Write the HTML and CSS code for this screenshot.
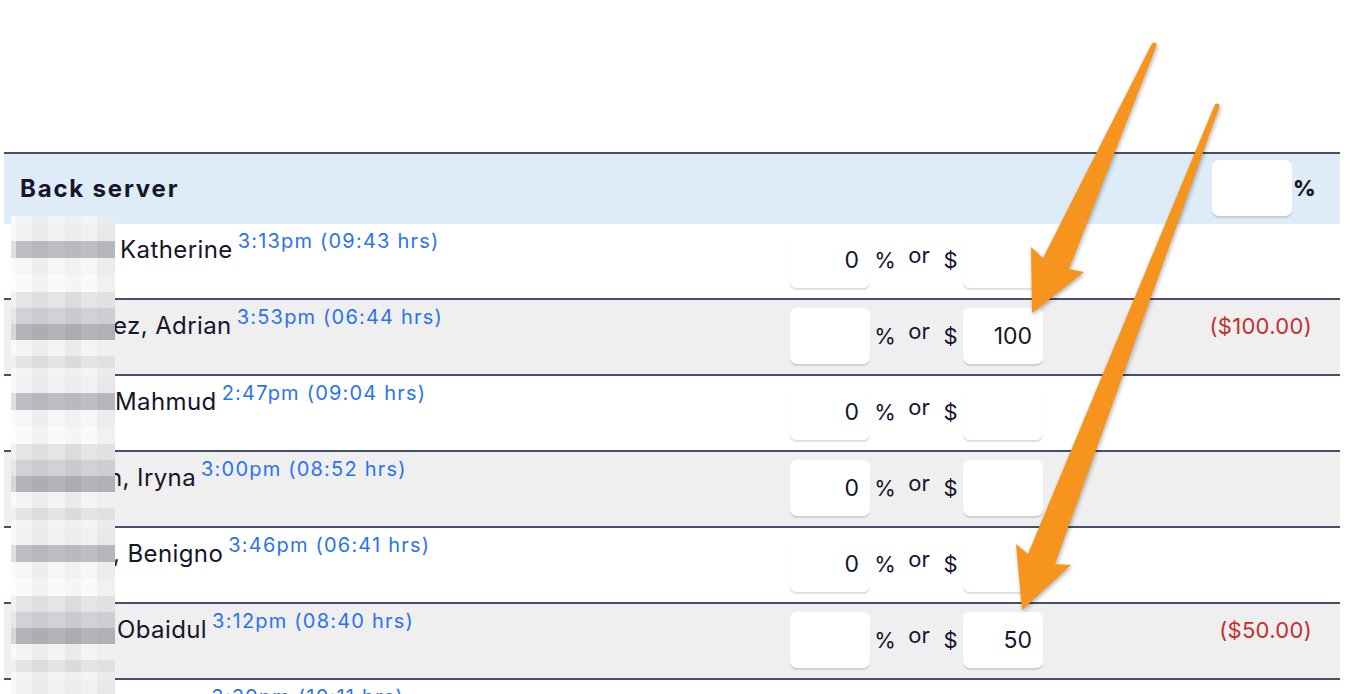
FILE: index.html
```html
<!DOCTYPE html>
<html lang="en">
<head>
    <meta charset="UTF-8">
    <meta name="viewport" content="width=device-width, initial-scale=1.0">
    <title>Tip Out - Back server</title>
    <link rel="stylesheet" href="styles.css">
</head>
<body>
    <div class="sheet">
        <div class="section-head">
            <h2>Back server</h2>
            <div class="pct-total">
                <input class="field" type="text" value="">
                <span>%</span>
            </div>
        </div>

        <div class="row">
            <div class="mask"></div>
            <div class="who"><span class="name nudge-7">Katherine</span><span class="clock">3:13pm (09:43 hrs)</span></div>
            <div class="tip-inputs">
                <input class="field" type="text" value="0">
                <span class="unit">%</span><span class="or">or</span><span class="unit">$</span>
                <input class="field" type="text" value="">
            </div>
            <div class="amount"></div>
        </div>

        <div class="row alt">
            <div class="mask"></div>
            <div class="who"><span class="name">ez, Adrian</span><span class="clock">3:53pm (06:44 hrs)</span></div>
            <div class="tip-inputs">
                <input class="field" type="text" value="">
                <span class="unit">%</span><span class="or">or</span><span class="unit">$</span>
                <input class="field" type="text" value="100">
            </div>
            <div class="amount">($100.00)</div>
        </div>

        <div class="row">
            <div class="mask"></div>
            <div class="who"><span class="name nudge-2">Mahmud</span><span class="clock">2:47pm (09:04 hrs)</span></div>
            <div class="tip-inputs">
                <input class="field" type="text" value="0">
                <span class="unit">%</span><span class="or">or</span><span class="unit">$</span>
                <input class="field" type="text" value="">
            </div>
            <div class="amount"></div>
        </div>

        <div class="row alt">
            <div class="mask"></div>
            <div class="who"><span class="name pull-5">h, Iryna</span><span class="clock">3:00pm (08:52 hrs)</span></div>
            <div class="tip-inputs">
                <input class="field" type="text" value="0">
                <span class="unit">%</span><span class="or">or</span><span class="unit">$</span>
                <input class="field" type="text" value="">
            </div>
            <div class="amount"></div>
        </div>

        <div class="row">
            <div class="mask"></div>
            <div class="who"><span class="name">, Benigno</span><span class="clock">3:46pm (06:41 hrs)</span></div>
            <div class="tip-inputs">
                <input class="field" type="text" value="0">
                <span class="unit">%</span><span class="or">or</span><span class="unit">$</span>
                <input class="field" type="text" value="">
            </div>
            <div class="amount"></div>
        </div>

        <div class="row alt">
            <div class="mask"></div>
            <div class="who"><span class="name nudge-4">Obaidul</span><span class="clock">3:12pm (08:40 hrs)</span></div>
            <div class="tip-inputs">
                <input class="field" type="text" value="">
                <span class="unit">%</span><span class="or">or</span><span class="unit">$</span>
                <input class="field" type="text" value="50">
            </div>
            <div class="amount">($50.00)</div>
        </div>

        <div class="row">
            <div class="mask"></div>
            <div class="who"><span class="name nudge-4">Ricardo</span><span class="clock">3:39pm (10:11 hrs)</span></div>
            <div class="tip-inputs">
                <input class="field" type="text" value="0">
                <span class="unit">%</span><span class="or">or</span><span class="unit">$</span>
                <input class="field" type="text" value="">
            </div>
            <div class="amount"></div>
        </div>
    </div>

    <!-- annotation arrows drawn over the screenshot -->
    <svg class="arrows" width="1352" height="694" viewBox="0 0 1352 694">
        <path d="M1151.7,44 L1043,258 L1031,247 L1032,313 L1084,272 L1069,269 L1156.3,46 A2.5,2.5 0 0 0 1151.7,44 Z"/>
        <path d="M1214.7,105 L1028,554 L1016,544 L1022,610 L1071,565 L1055,564 L1219.3,107 A2.5,2.5 0 0 0 1214.7,105 Z"/>
    </svg>
</body>
</html>
```

FILE: styles.css
```css
* {
    margin: 0;
    padding: 0;
    box-sizing: border-box;
}

body {
    font-family: 'Inter', 'Noto Sans', sans-serif;
    color: #15152c;
    background: #fff;
    overflow: hidden;
}

.sheet {
    width: 1336px;
    margin: 152px 0 0 4px;
    border-top: 2px solid #464e69;
}

.section-head {
    height: 70px;
    background: #ddecf7;
    display: flex;
    align-items: center;
    justify-content: space-between;
    padding: 0 30px 2px 16px;
}

.section-head h2 {
    font-size: 24px;
    font-weight: 700;
    letter-spacing: 1.8px;
}

.pct-total {
    display: flex;
    align-items: center;
    gap: 1px;
    font-size: 22px;
    font-weight: 800;
}

.pct-total span {
    width: 17px;
}

.field {
    width: 80px;
    height: 56px;
    border: none;
    border-radius: 7px;
    background: #fff;
    box-shadow: 0 2px 1px rgba(0, 0, 0, 0.13);
    font-family: inherit;
    font-size: 23px;
    color: #15152c;
    text-align: right;
    padding-right: 11px;
    outline: none;
}

.row {
    position: relative;
    height: 76px;
    border-bottom: 2px solid #464e69;
    display: flex;
    background: #fff;
}

.row.alt {
    background: #efefef;
}

.who {
    flex: 1;
    padding: 2px 0 0 109px;
    line-height: 30px;
    white-space: nowrap;
}

.name {
    font-size: 24px;
    letter-spacing: 0.4px;
}

.nudge-2 { margin-left: 2px; }
.nudge-4 { margin-left: 4px; }
.nudge-7 { margin-left: 7px; }
.pull-5 { margin-left: -5px; }

.clock {
    font-size: 20px;
    letter-spacing: 1.2px;
    color: #2b73ee;
    margin-left: 5px;
    vertical-align: 10px;
}

.tip-inputs {
    width: 253px;
    display: flex;
    align-items: center;
    padding-bottom: 2px;
    font-size: 22px;
}

.unit,
.or {
    text-align: center;
}

.unit {
    width: 30px;
}

.unit + .or + .unit {
    width: 25px;
}

.or {
    width: 38px;
    margin-bottom: 10px;
}

.amount {
    width: 297px;
    padding: 13px 28px 0 0;
    text-align: right;
    font-size: 22px;
    letter-spacing: 0.3px;
    color: #c3302c;
}

/* pixelated name cover */
.mask {
    position: absolute;
    left: 7px;
    top: -8px;
    width: 104px;
    height: 76px;
    z-index: 2;
    background:
        linear-gradient(to right, rgba(255,255,255,0.5) 0 5px, transparent 5px 21px, rgba(0,0,0,0.03) 21px 37px, transparent 37px 54px, rgba(0,0,0,0.02) 54px 70px, transparent 70px 86px, rgba(0,0,0,0.04) 86px 104px),
        linear-gradient(to bottom, #f2f5f7 0 9px, #f1f1f2 9px 25px, #bfbdc3 25px 42px, #f6f6f6 42px 58px, #fafafa 58px 76px);
}

.row.alt .mask {
    background:
        linear-gradient(to right, rgba(255,255,255,0.45) 0 5px, transparent 5px 21px, rgba(0,0,0,0.03) 21px 37px, transparent 37px 54px, rgba(0,0,0,0.04) 54px 70px, transparent 70px 86px, rgba(0,0,0,0.02) 86px 104px),
        linear-gradient(to bottom, #e5e5e8 0 16px, #d2d1d5 16px 32px, #b5b3ba 32px 48px, #f4f4f2 48px 64px, #e4e4e7 64px 76px);
}

.arrows {
    position: absolute;
    top: 0;
    left: 0;
    pointer-events: none;
    z-index: 5;
    fill: #f7941d;
    filter: drop-shadow(1px 2px 2px rgba(0, 0, 0, 0.3));
}
```
